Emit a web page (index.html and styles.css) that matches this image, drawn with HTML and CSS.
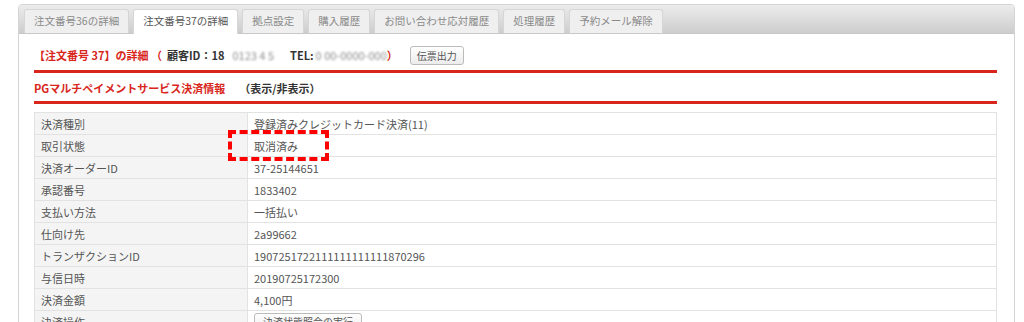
FILE: index.html
```html
<!DOCTYPE html>
<html lang="ja">
<head>
<meta charset="UTF-8">
<title>注文番号37の詳細</title>
<link rel="stylesheet" href="styles.css">
</head>
<body>
<div class="panel">
  <ul class="tabs">
    <li class="tab">注文番号36の詳細</li>
    <li class="tab active">注文番号37の詳細</li>
    <li class="tab">拠点設定</li>
    <li class="tab">購入履歴</li>
    <li class="tab">お問い合わせ応対履歴</li>
    <li class="tab">処理履歴</li>
    <li class="tab">予約メール解除</li>
  </ul>
  <div class="content">
    <div class="heading">
      <span class="red">【注文番号 37】の詳細 （</span>
      <span class="dark customer">顧客ID：18</span>
      <span class="blur">0123 4 5</span>
      <span class="dark tel">TEL:</span><span class="blur near">0 00-0000-000</span>
      <span class="red">）</span>
      <button class="slip">伝票出力</button>
    </div>
    <div class="heading second">
      <span class="red">PGマルチペイメントサービス決済情報</span>
      <span class="dark toggle">（表示/非表示）</span>
    </div>
    <div class="table-wrap">
      <table class="info">
        <tr><th>決済種別</th><td>登録済みクレジットカード決済(11)</td></tr>
        <tr><th>取引状態</th><td>取消済み</td></tr>
        <tr><th>決済オーダーID</th><td>37-25144651</td></tr>
        <tr><th>承認番号</th><td>1833402</td></tr>
        <tr><th>支払い方法</th><td>一括払い</td></tr>
        <tr><th>仕向け先</th><td>2a99662</td></tr>
        <tr><th>トランザクションID</th><td>1907251722111111111111870296</td></tr>
        <tr><th>与信日時</th><td>20190725172300</td></tr>
        <tr><th>決済金額</th><td>4,100円</td></tr>
        <tr><th>決済操作</th><td><button class="small">決済状態照会の実行</button></td></tr>
      </table>
      <div class="mark"></div>
    </div>
  </div>
</div>
</body>
</html>
```

FILE: styles.css
```css
body {
  margin: 0;
  background-color: #fff;
  font-family: "Noto Sans CJK JP", "Open Sans", sans-serif;
  font-size: 11px;
  color: #444;
}

.panel {
  margin: 4px 0 0 18px;
  width: 995px;
  border: 1px solid #d4d4d4;
  border-radius: 4px;
  height: 340px;
}

.tabs {
  list-style: none;
  margin: 0;
  padding: 4px 0 0 5px;
  height: 24px;
  display: flex;
  gap: 4px;
  background: linear-gradient(#ececec, #cdcdcd);
  border-bottom: 1px solid #c8c8c8;
  border-radius: 3px 3px 0 0;
}

.tab {
  height: 23px;
  line-height: 22px;
  padding: 0 9px;
  font-size: 10.5px;
  background-color: #efefef;
  border: 1px solid #d6d6d6;
  border-bottom: none;
  border-radius: 3px 3px 0 0;
  color: #8a8a8a;
  white-space: nowrap;
}

.tab.active {
  background-color: #fff;
  color: #555;
  height: 24px;
  margin-bottom: -1px;
}

.content {
  padding: 8px 17px 0 15px;
}

.heading {
  display: flex;
  align-items: center;
  height: 26px;
  padding-bottom: 2px;
  border-bottom: 3px solid #d8261c;
  font-weight: bold;
  margin-bottom: 4px;
}

.heading.second {
  height: 22px;
  padding-bottom: 2px;
  margin-bottom: 8px;
}

.red {
  color: #d8261c;
}

.dark {
  color: #333;
}

.customer {
  margin-left: 5px;
}

.tel {
  margin-left: 16px;
}

.toggle {
  margin-left: 14px;
}

.blur {
  color: #8a8a8a;
  font-weight: normal;
  filter: blur(1.3px);
  margin-left: 8px;
}

.blur.near {
  margin-left: 2px;
}

.slip {
  margin-left: 12px;
  height: 19px;
  padding: 0 6px;
  font-family: inherit;
  font-size: 10px;
  color: #555;
  background: linear-gradient(#fff, #ececec);
  border: 1px solid #bbb;
  border-radius: 3px;
}

.table-wrap {
  position: relative;
}

.info {
  width: 100%;
  border-collapse: collapse;
  border: 1px solid #e2e2e2;
}

.info th,
.info td {
  height: 21px;
  padding: 0 6px;
  border: 1px solid #e2e2e2;
  text-align: left;
  font-weight: normal;
  color: #555;
}

.info th {
  width: 200px;
  background-color: #f4f4f4;
}

.small {
  font-family: inherit;
  font-size: 10px;
  height: 18px;
  padding: 0 8px;
  background: linear-gradient(#fff, #ececec);
  border: 1px solid #bbb;
  border-radius: 3px;
  color: #555;
}

/* 赤い点線の注目枠 */
.mark {
  position: absolute;
  left: 194px;
  top: 18px;
  width: 93px;
  height: 23px;
  border: 4px dashed #f00;
}
```
